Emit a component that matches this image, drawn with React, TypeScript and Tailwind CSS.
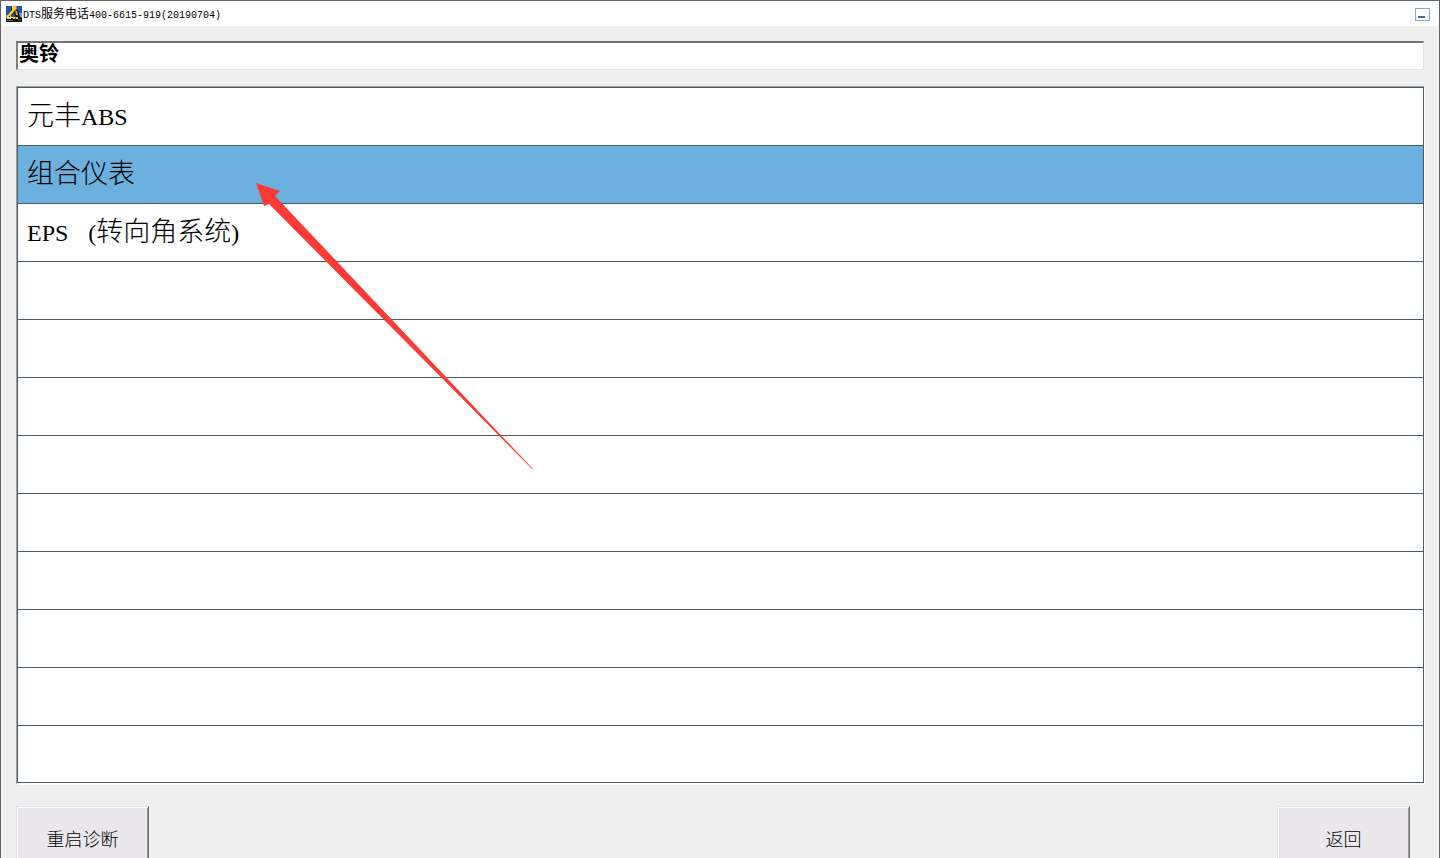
import * as React from 'react';

const ROW_COUNT = 12;

type Part = { text: string; kind?: 'word' | 'paren' };

const systems: Part[][] = [
  [{ text: '元丰' }, { text: 'ABS', kind: 'word' }],
  [{ text: '组合仪表' }],
  [
    { text: 'EPS', kind: 'word' },
    { text: ' (', kind: 'paren' },
    { text: '转向角系统' },
    { text: ')', kind: 'word' },
  ],
];

const partStyles = {
  word: "font-['Liberation_Serif',serif] text-2xl leading-none font-normal",
  paren:
    "w-[28px] whitespace-pre text-right font-['Liberation_Serif',serif] text-2xl leading-none font-normal",
};

function AppIcon() {
  return (
    <svg width="16" height="16" viewBox="0 0 16 16" aria-hidden="true">
      <path fill="#1d56b8" d="M0 0h16v16H0z" />
      <path fill="#6f9bd8" d="M0 9h2v3H0zM13 7h3v4h-3z" />
      <path fill="#0c0d14" d="M0 12h2l3-1h8l3 1v4H0z" />
      <path fill="#15120c" d="M6 1h4l3 6 1 5h-4L8 7l-3 3-3 1 2-5z" />
      <path fill="#ffca20" d="M6 0h4l1 3-2 1-2 3-3 3-2-1 2-3 2-2z" />
      <path fill="#f3a416" d="M9 4l2 1 1 4h-2z" />
      <path fill="#ffd640" d="M1 9h3l2 2h3v2H1z" />
      <path fill="#ffc21c" d="M9 11h3v2h-2z" />
      <path fill="#0c0d14" d="M3 10h1v1H3zM5 12h2v1H5z" />
      <path fill="#56607a" d="M1 14h6v1H1zM12 13h3v1h-3z" />
    </svg>
  );
}

function Arrow() {
  return (
    <svg
      className="pointer-events-none absolute left-[238px] top-[95px]"
      width="280"
      height="290"
      viewBox="0 0 280 290"
      aria-hidden="true"
    >
      <path fill="#fc3a38" d="M1 1L25 9L20 14L278 287L277 287L14 22L9 24Z" />
    </svg>
  );
}

function PushButton({ children }: { children: React.ReactNode }) {
  return (
    <button
      type="button"
      className="h-[68px] w-[133px] border border-b-[#696969] border-l-[#e3e3e3] border-r-[#696969] border-t-[#e3e3e3] bg-[#eae8ed]"
    >
      <span className="flex h-full items-center justify-center border border-b-[#a0a0a0] border-l-white border-r-[#a0a0a0] border-t-white pb-1 text-lg font-light">
        {children}
      </span>
    </button>
  );
}

export default function App() {
  const [selected, setSelected] = React.useState(1);

  return (
    <div className="h-screen overflow-hidden border-x border-t border-[#646464] bg-[#efefef] font-['Noto_Sans_CJK_SC',sans-serif] text-black">
      <header className="flex h-[25px] items-center justify-between bg-white pl-[5px] pr-[9px] pt-px">
        <div className="flex items-center gap-px">
          <AppIcon />
          <h1 className="flex items-baseline text-xs leading-4">
            <span className="font-['Liberation_Mono',monospace] text-[10px]">DTS</span>
            服务电话
            <span className="font-['Liberation_Mono',monospace] text-[10px]">
              400-6615-919(20190704)
            </span>
          </h1>
        </div>
        <button
          type="button"
          aria-label="最小化"
          className="flex h-[13px] w-[15px] items-end border border-[#8aaac0] bg-white pb-[2px] pl-[2px]"
        >
          <span className="h-[2px] w-[7px] bg-[#4a6fa5]" />
        </button>
      </header>

      <main className="pl-[15px] pr-[14px] pt-[15px]">
        <div className="pr-px">
          <input
            readOnly
            aria-label="车型"
            value="奥铃"
            className="block h-[29px] w-full border-b border-l-2 border-r border-t-2 border-b-[#e3e3e3] border-l-[#808080] border-r-[#e3e3e3] border-t-[#737373] bg-white px-px pb-2 text-xl leading-5 font-bold outline-none"
          />
        </div>

        <div className="relative mt-4 border-b-2 border-l border-r border-t border-b-white border-l-[#a0a0a0] border-r-white border-t-[#a0a0a0]">
          <ul className="border-l border-r border-t border-[#4a5a66]">
            {Array.from({ length: ROW_COUNT }, (_, i) => {
              const parts = systems[i];
              return (
                <li
                  key={i}
                  className="h-[58px] border-b border-[#4a5a66] bg-white last:h-[57px]"
                >
                  {parts && (
                    <button
                      type="button"
                      onClick={() => setSelected(i)}
                      className={
                        i === selected
                          ? 'block h-full w-full bg-[#6bb0de] px-[9px] pb-[6px] text-[27px] leading-8 font-light'
                          : 'block h-full w-full bg-white px-[9px] pb-[6px] text-[27px] leading-8 font-light'
                      }
                    >
                      <span className="flex items-baseline">
                        {parts.map((part) => (
                          <span
                            key={part.text}
                            className={part.kind ? partStyles[part.kind] : 'leading-8'}
                          >
                            {part.text}
                          </span>
                        ))}
                      </span>
                    </button>
                  )}
                </li>
              );
            })}
          </ul>
          <Arrow />
        </div>

        <div className="mt-[21px] flex justify-between pr-[15px]">
          <PushButton>重启诊断</PushButton>
          <PushButton>返回</PushButton>
        </div>
      </main>
    </div>
  );
}
